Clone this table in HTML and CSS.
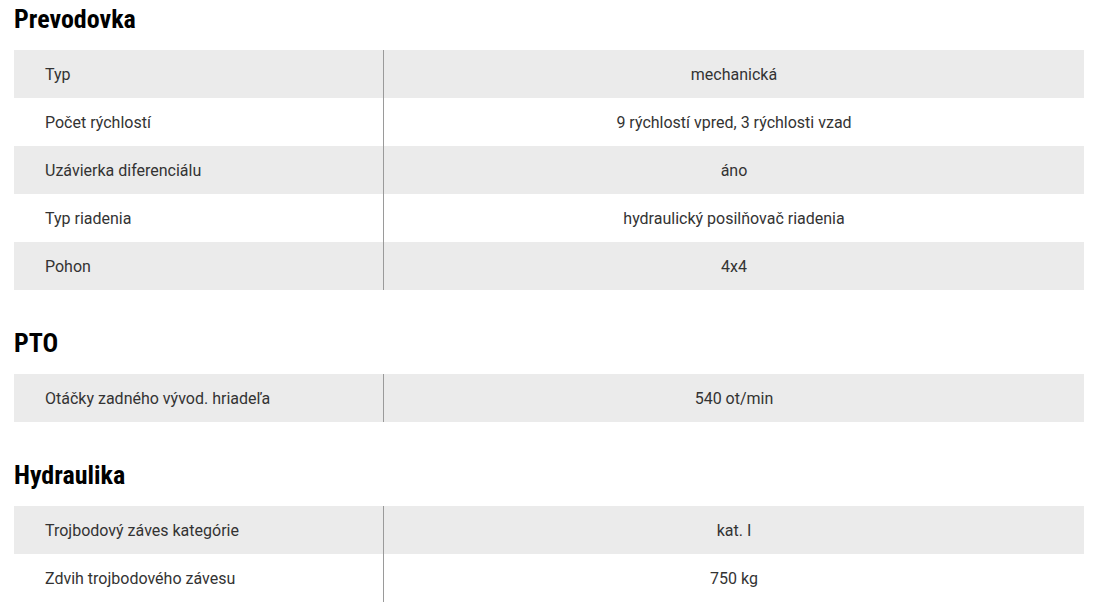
FILE: index.html
```html
<!DOCTYPE html>
<html lang="sk">
<head>
<meta charset="utf-8">
<title>Parametre</title>
<link rel="stylesheet" href="styles.css">
</head>
<body>
<section class="spec">
  <h2 class="spec-title">Prevodovka</h2>
  <div class="spec-table">
    <div class="row"><div class="label">Typ</div><div class="value">mechanická</div></div>
    <div class="row"><div class="label">Počet rýchlostí</div><div class="value">9 rýchlostí vpred, 3 rýchlosti vzad</div></div>
    <div class="row"><div class="label">Uzávierka diferenciálu</div><div class="value">áno</div></div>
    <div class="row"><div class="label">Typ riadenia</div><div class="value">hydraulický posilňovač riadenia</div></div>
    <div class="row"><div class="label">Pohon</div><div class="value">4x4</div></div>
  </div>
</section>
<section class="spec">
  <h2 class="spec-title">PTO</h2>
  <div class="spec-table">
    <div class="row"><div class="label">Otáčky zadného vývod. hriadeľa</div><div class="value">540 ot/min</div></div>
  </div>
</section>
<section class="spec">
  <h2 class="spec-title">Hydraulika</h2>
  <div class="spec-table">
    <div class="row"><div class="label">Trojbodový záves kategórie</div><div class="value">kat. I</div></div>
    <div class="row"><div class="label">Zdvih trojbodového závesu</div><div class="value">750 kg</div></div>
  </div>
</section>
</body>
</html>
```
FILE: styles.css
```css
html, body {
  margin: 0;
  padding: 0;
  background: #fff;
}
body {
  padding: 4px 12px 0 14px;
  font-family: Roboto, "Liberation Sans", sans-serif;
  color: #333;
}
.spec + .spec {
  margin-top: 38px;
}
.spec-title {
  margin: 0 0 16px;
  font-family: "Roboto Condensed", Roboto, "Liberation Sans", sans-serif;
  font-stretch: 75%;
  font-weight: 700;
  font-size: 26px;
  line-height: 30px;
  color: #000;
}
.spec-table {
  display: flex;
  flex-direction: column;
}
.row {
  display: grid;
  grid-template-columns: 370px 1fr;
  height: 48px;
  font-size: 16px;
}
.row:nth-child(odd) {
  background: #ebebeb;
}
.label {
  display: flex;
  align-items: center;
  padding-left: 31px;
  border-right: 1px solid #9a9a9a;
}
.value {
  display: flex;
  align-items: center;
  justify-content: center;
}
```
